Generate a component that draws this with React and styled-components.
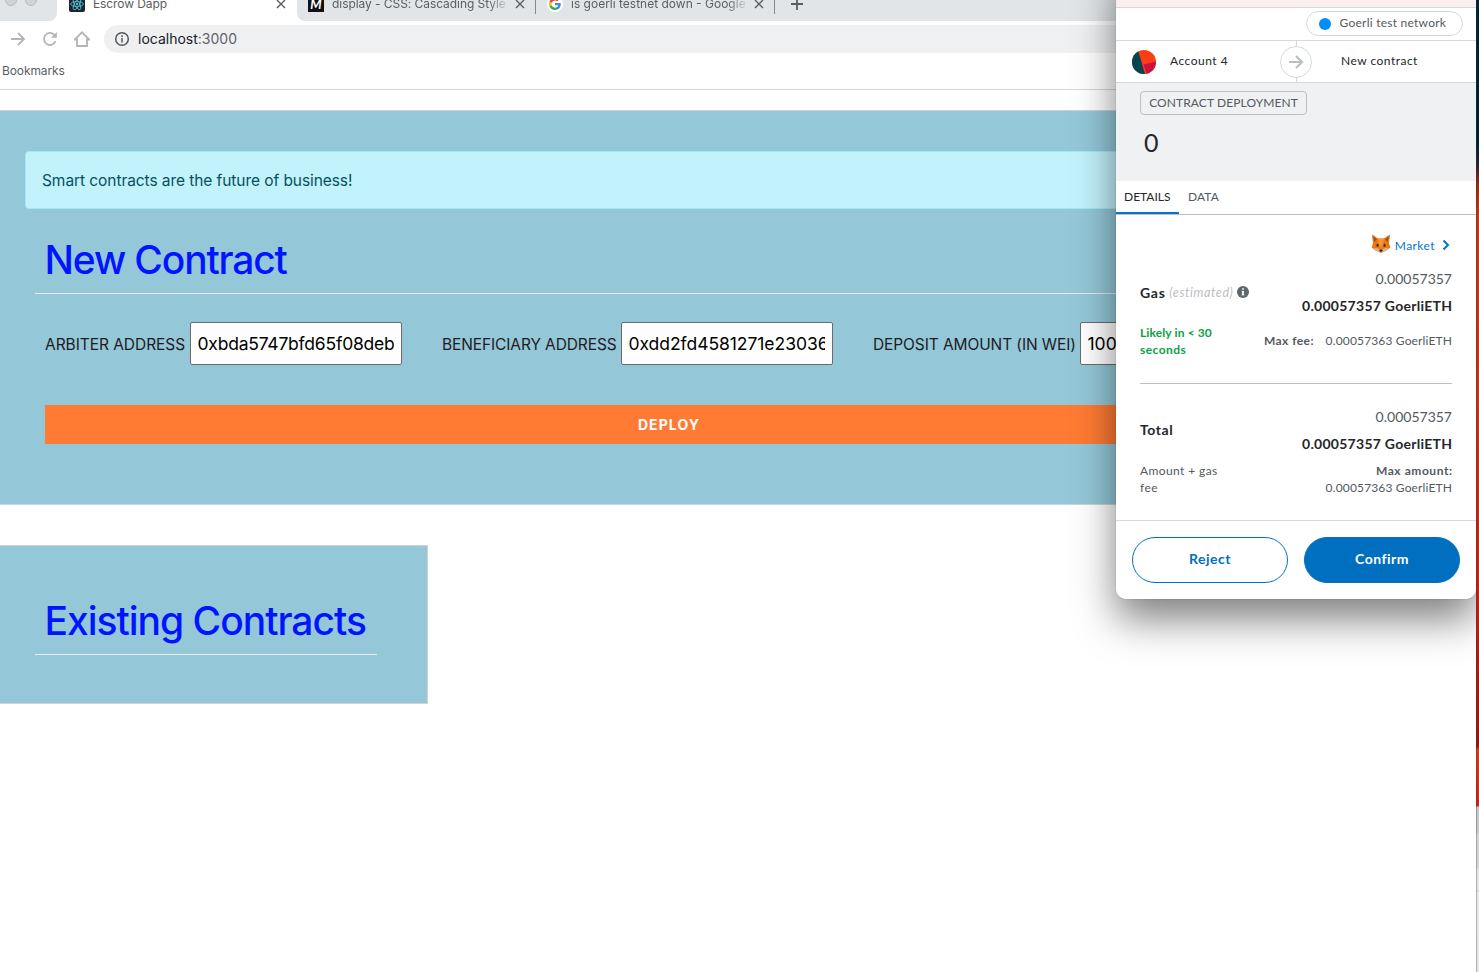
import React from "react";
import styled, { createGlobalStyle, css } from "styled-components";

const Global = createGlobalStyle`
  *, *::before, *::after { box-sizing: border-box; }
  html, body { margin: 0; padding: 0; background: #fff; }
  body { overflow: hidden; }
`;

const ui = `Inter, "Open Sans", sans-serif`;
const euclid = `Lato, "Open Sans", sans-serif`;

const Desktop = styled.div`
  position: relative;
  display: flex;
  width: 1479px;
  height: 972px;
  overflow: hidden;
  font-family: ${ui};
`;
const BrowserWindow = styled.main`
  flex: 1;
  min-width: 0;
  background: #fff;
  overflow: hidden;
`;
const Wallpaper = styled.div`
  width: 3px;
  flex: none;
  border-left: 1px solid rgba(60, 50, 50, 0.3);
  background: linear-gradient(
    to bottom,
    #02202f 0, #02202f 145px, #2b2230 165px, #8f2f1c 185px, #b83a1a 215px, #b8361b 400px,
    #b3251a 600px, #8d1a14 747px, #c8401e 749px, #bb2c18 806px, #c4c4c4 807px, #c9c9c9 833px,
    #d6d6d6 834px, #d4d4d4 868px, #e2e2e2 869px, #e6e6e6 890px, #c8c8c8 891px, #e8e8e8 892px, #e6e6e6 972px
  );
`;

/* Browser chrome */
const TabStrip = styled.div`
  display: flex;
  height: 21px;
  background: #fff;
`;
const WindowControls = styled.div`
  display: flex;
  gap: 8px;
  width: 57px;
  height: 21px;
  padding-left: 5px;
  background: #e2e5e8;
  border-bottom-right-radius: 8px;
`;
const Light = styled.span`
  width: 12px;
  height: 12px;
  margin-top: -6px;
  border-radius: 50%;
  background: #d2d3d4;
  border: 1px solid #b9babb;
`;
const Tab = styled.div`
  display: flex;
  align-items: center;
  width: ${(p) => p.$w}px;
  height: 8px;
  padding: 0 ${(p) => p.$pr || 10}px 0 ${(p) => p.$pl || 11}px;
`;
const TabTitle = styled.span`
  flex: 1;
  min-width: 0;
  margin: 0 5px 0 8px;
  font-size: 12px;
  line-height: 16px;
  letter-spacing: ${(p) => p.$ls || 0}px;
  color: #5b5e61;
  white-space: nowrap;
  overflow: hidden;
  ${(p) => p.$fade && css`mask-image: linear-gradient(to right, #000 calc(100% - 22px), transparent);`}
`;
const InactiveTabs = styled.div`
  display: flex;
  flex: 1;
  background: #e2e5e8;
  border-bottom-left-radius: 8px;
`;
const TabDivider = styled.span`
  width: 1px;
  height: 14px;
  background: #85888b;
`;
const Favicon = styled.span`
  display: flex;
  flex: none;
  align-items: center;
  justify-content: center;
  width: 16px;
  height: 16px;
  overflow: hidden;
  border-radius: ${(p) => p.$r || 0};
  background: ${(p) => p.$bg};
  color: #fff;
  font: italic 700 13px/16px ${euclid};
`;
const Toolbar = styled.div`
  display: flex;
  align-items: center;
  height: 36px;
  padding-left: 10px;
`;
const ToolIcons = styled.div`
  display: flex;
  align-items: center;
  gap: 16px;
  width: 94px;
`;
const AddressBar = styled.div`
  display: flex;
  align-items: center;
  flex: 1;
  height: 28px;
  padding-left: 10px;
  gap: 8px;
  border-radius: 14px 0 0 14px;
  background: #eff0f2;
  color: #5f6368;
`;
const Url = styled.span`
  padding-bottom: 1px;
  font-size: 14px;
  line-height: 18px;
`;
const Host = styled.span`
  color: #202124;
`;
const BookmarksBar = styled.div`
  height: 33px;
  padding: 6px 0 0 2px;
  border-bottom: 1px solid #d5d6d7;
  font-size: 12px;
  line-height: 16px;
  letter-spacing: -0.1px;
  color: #5b5e61;
`;

/* Page */
const Page = styled.div`
  display: flex;
  flex-direction: column;
  align-items: flex-start;
  gap: 40px;
  padding-top: 20px;
`;
const Panel = styled.section`
  width: ${(p) => p.$w}px;
  height: ${(p) => p.$h}px;
  padding: ${(p) => p.$pad};
  border: 1px solid #d3d3d3;
  border-left: 0;
  background: #94c8d8;
`;
const Alert = styled.div`
  width: 1286px;
  height: 58px;
  margin: 0 0 27px -10px;
  padding: 17px 16px 0;
  border: 1px solid #9eeaf9;
  border-radius: 4px;
  background: #c2f2fb;
  color: #055160;
  font-size: 15.5px;
  line-height: 24px;
  letter-spacing: -0.07px;
`;
const Heading = styled.h1`
  margin: 0;
  padding: 0 0 9px 9.5px;
  border-bottom: 1px solid #e9ecef;
  color: #0014ff;
  font-size: 39px;
  font-weight: 550;
  line-height: 48px;
  white-space: nowrap;
  letter-spacing: ${(p) => p.$ls}px;
`;
const Fields = styled.div`
  display: flex;
  align-items: center;
  gap: 40px;
  padding: 28px 0 0 10px;
`;
const Field = styled.label`
  display: flex;
  align-items: center;
  justify-content: space-between;
  flex: none;
  width: ${(p) => p.$w}px;
  color: #211a1e;
  font-size: 15.5px;
  letter-spacing: ${(p) => p.$ls}px;
  white-space: nowrap;
`;
const FieldName = styled.span`
  padding-top: 2px;
`;
const FieldInput = styled.input`
  width: 212px;
  height: 43px;
  padding: 0 7px 0 6.5px;
  border: 1px solid #6b6b6b;
  border-radius: 2px;
  background: #fff;
  color: #000;
  font: 400 17.5px ${ui};
  letter-spacing: ${(p) => p.$ls}px;
`;
const DeployButton = styled.button`
  display: block;
  width: 1246px;
  height: 39px;
  margin: 40px 0 0 10px;
  padding: 0 0 0 2px;
  border: 0;
  background: #ff7b33;
  color: #fff;
  font: 700 14px ${ui};
  letter-spacing: 1.1px;
`;

/* Wallet popup */
const Popup = styled.aside`
  position: absolute;
  top: 0;
  left: 1116px;
  display: flex;
  flex-direction: column;
  width: 360px;
  height: 599px;
  overflow: hidden;
  border-radius: 0 0 10px 10px;
  background: #fff;
  font-family: ${euclid};
  color: #24272a;
`;
const ShadowClip = styled.div`
  position: absolute;
  inset: 0 3px 0 0;
  overflow: hidden;
  pointer-events: none;
`;
const PopupShadow = styled.div`
  position: absolute;
  top: -40px;
  left: 1116px;
  width: 360px;
  height: 639px;
  border-radius: 10px;
  box-shadow: 0 0 1px rgba(0, 0, 0, 0.5), 0 20px 40px rgba(0, 0, 0, 0.5);
`;
const Warning = styled.div`
  height: 8px;
  background: #fbefee;
  border-bottom: 1px solid #d6d9dc;
`;
const NetworkRow = styled.div`
  display: flex;
  justify-content: flex-end;
  height: 33px;
  padding: 3px 13px 0 0;
  border-bottom: 1px solid #d6d9dc;
`;
const NetworkPill = styled.div`
  display: flex;
  align-items: center;
  gap: 8.5px;
  width: 157px;
  height: 25px;
  padding-left: 12px;
  border: 1px solid #d6d9dc;
  border-radius: 13px;
`;
const Dot = styled.span`
  width: 12px;
  height: 12px;
  border-radius: 50%;
  background: #038dfb;
`;
const Txt = styled.span`
  margin-right: ${(p) => -(p.$ls || 0)}px;
  font-size: ${(p) => p.$s || 12}px;
  font-weight: ${(p) => (p.$b ? 700 : 400)};
  font-style: ${(p) => (p.$i ? "italic" : "normal")};
  line-height: 17px;
  color: ${(p) => p.$c || "#24272a"};
  letter-spacing: ${(p) => p.$ls || 0}px;
  white-space: nowrap;
`;
const RaisedTxt = styled(Txt)`
  padding-bottom: 2px;
`;
const Parties = styled.div`
  display: grid;
  grid-template-columns: 164px 32px 1fr;
  align-items: center;
  height: 42px;
  border-bottom: 1px solid #d6d9dc;
`;
const Sender = styled.div`
  display: flex;
  align-items: center;
  gap: 14px;
  padding-left: 16px;
`;
const PartyName = styled.div`
  display: flex;
  padding: 0 0 2px ${(p) => p.$pl || 0}px;
`;
const Summary = styled.div`
  height: 98px;
  padding: 8px 24px 0;
  background: #f0f1f3;
`;
const Tag = styled.div`
  display: flex;
  align-items: center;
  justify-content: center;
  width: 167px;
  height: 24px;
  border: 1px solid #bbc0c5;
  border-radius: 4px;
`;
const Amount = styled.div`
  padding: 10px 0 0 4px;
  font-size: 25px;
  line-height: 34px;
`;
const Tabs = styled.div`
  display: flex;
  height: 34px;
  border-bottom: 1px solid #bbc0c5;
`;
const DetailTab = styled.div`
  display: flex;
  width: ${(p) => p.$w}px;
  height: 33px;
  padding: 7px 0 0 ${(p) => p.$pl}px;
  border-bottom: ${(p) => (p.$on ? "2px solid #0376c9" : "0")};
`;
const Body = styled.div`
  flex: 1;
  padding: 18px 24px 0;
`;
const MarketRow = styled.div`
  display: flex;
  justify-content: flex-end;
  align-items: center;
  height: 24px;
  gap: 3.5px;
`;
const Line = styled.div`
  display: flex;
  justify-content: space-between;
  height: ${(p) => p.$h}px;
`;
const Labels = styled.div`
  display: flex;
  flex-direction: ${(p) => (p.$col ? "column" : "row")};
  gap: ${(p) => (p.$col ? 0 : 4.5)}px;
  padding-top: ${(p) => p.$pt || 0}px;
`;
const Values = styled.div`
  display: flex;
  flex-direction: ${(p) => (p.$row ? "row" : "column")};
  align-items: ${(p) => (p.$row ? "flex-start" : "flex-end")};
  gap: ${(p) => p.$gap || 0}px;
  padding-top: ${(p) => p.$pt || 0}px;
`;
const Rule = styled.div`
  height: 1px;
  background: #bbc0c5;
`;
const Footer = styled.div`
  display: flex;
  gap: 16px;
  height: 79px;
  padding: 16px;
  border-top: 1px solid #d6d9dc;
`;
const Action = styled.button`
  flex: 1;
  height: 46px;
  padding: 0 0 3px;
  border: 1px solid #0070c0;
  border-radius: 23px;
  background: ${(p) => (p.$primary ? "#006fc0" : "#fff")};
  color: ${(p) => (p.$primary ? "#fff" : "#0070c0")};
  font: 700 14px ${euclid};
  letter-spacing: 0.5px;
`;
const Icon = styled.svg`
  flex: none;
  display: block;
  margin: ${(p) => p.$m || 0};
`;

const Close = () => (
  <Icon width="10" height="10" viewBox="0 0 10 10" stroke="#5b5e61" strokeWidth="1.4">
    <path d="M1 1l8 8M9 1l-8 8" />
  </Icon>
);
const ReactLogo = () => (
  <svg width="14" height="14" viewBox="-12 -12 24 24" fill="none" stroke="#4fc3e0" strokeWidth="1.5">
    <circle r="2" fill="#4fc3e0" stroke="none" />
    <ellipse rx="11" ry="4.2" />
    <ellipse rx="11" ry="4.2" transform="rotate(60)" />
    <ellipse rx="11" ry="4.2" transform="rotate(120)" />
  </svg>
);
const GoogleLogo = () => (
  <svg width="12" height="12" viewBox="0 0 24 24">
    <path fill="#4285f4" d="M23.5 12.3c0-.8-.1-1.6-.2-2.3H12v4.5h6.5c-.3 1.5-1.1 2.7-2.4 3.6v3h3.9c2.2-2.1 3.5-5.2 3.5-8.8z" />
    <path fill="#34a853" d="M12 24c3.2 0 6-1.1 8-2.9l-3.9-3c-1.1.7-2.4 1.2-4.1 1.2-3.1 0-5.8-2.1-6.7-5H1.3v3.1C3.3 21.3 7.3 24 12 24z" />
    <path fill="#fbbc05" d="M5.3 14.3c-.3-.7-.4-1.5-.4-2.3s.1-1.6.4-2.3V6.6H1.3C.5 8.2 0 10 0 12s.5 3.8 1.3 5.4l4-3.1z" />
    <path fill="#ea4335" d="M12 4.8c1.8 0 3.3.6 4.6 1.8L20 3.1C18 1.2 15.2 0 12 0 7.3 0 3.3 2.7 1.3 6.6l4 3.1c.9-2.8 3.6-4.9 6.7-4.9z" />
  </svg>
);
const Fox = () => (
  <Icon width="20" height="20" viewBox="0 0 20 20" $m="-3px 0 0 0">
    <path d="M1 1.2Q1 .6 1.7.8L7 4.500h6L18.300.8q.7-.2.7.4L18 9l1.300 4.500-4.300 3.200L10 19l-5-2.300-4.300-3.200L2 9z" fill="#e8771a" />
    <path d="M2.3 2.5L6 5.2 3.2 8zM17.7 2.5L14 5.2 16.8 8z" fill="#9a5222" />
    <path d="M7 4.5h6L11.5 12h-3z" fill="#f7962f" />
    <path d="M2 14.5L5.5 14l4.5 2 4.5-2 3.5.5-3 2.2L10 19l-5-2.3z" fill="#d9b48c" />
    <path d="M8.5 11.5h3L10 16.5z" fill="#f08b2a" />
    <ellipse cx="6.5" cy="11.3" rx="1" ry="1.5" fill="#38251b" />
    <ellipse cx="13.5" cy="11.3" rx="1" ry="1.5" fill="#38251b" />
    <ellipse cx="10" cy="16.6" rx="1.7" ry="1.2" fill="#30241f" />
  </Icon>
);
const Avatar = () => (
  <Icon width="24" height="24" viewBox="0 0 24 24">
    <defs><clipPath id="avatar"><circle cx="12" cy="12" r="12" /></clipPath></defs>
    <g clipPath="url(#avatar)">
      <rect width="24" height="24" fill="#ff3d14" />
      <path d="M0 0h6L13 24H0z" fill="#034551" />
      <path d="M11.5 14.5L24 11.5V24H14.5z" fill="#c8143f" />
    </g>
  </Icon>
);
const TransferArrow = () => (
  <Icon width="32" height="41" viewBox="0 0 32 41" fill="none">
    <path d="M16.5 0v41" stroke="#d6d9dc" />
    <circle cx="16" cy="21" r="15.5" fill="#fff" stroke="#d6d9dc" />
    <path d="M9 21h12.5M16 15l6 6-6 6" stroke="#bbc0c5" strokeWidth="2.2" />
  </Icon>
);
const Info = () => (
  <Icon width="12" height="12" viewBox="0 0 12 12" $m="2px 0 0 0">
    <circle cx="6" cy="6" r="6" fill="#5e666e" />
    <path d="M6 2.2v1.6M6 5v4" stroke="#fff" strokeWidth="1.7" />
    <path d="M4.8 5.4H6M4.6 8.9h2.8" stroke="#fff" strokeWidth=".9" />
  </Icon>
);

const grey = "#535a61";

export default function App() {
  return (
    <Desktop>
      <Global />
      <BrowserWindow>
        <TabStrip>
          <WindowControls><Light /><Light /></WindowControls>
          <Tab $w={240} $pl={12} $pr={11}>
            <Favicon $bg="#20232a" $r="2px"><ReactLogo /></Favicon>
            <TabTitle $ls={-0.1}>Escrow Dapp</TabTitle>
            <Close />
          </Tab>
          <InactiveTabs>
            <Tab $w={238}>
              <Favicon $bg="#111">M</Favicon>
              <TabTitle $fade $ls={-0.06}>display - CSS: Cascading Style Sheets</TabTitle>
              <Close />
            </Tab>
            <TabDivider />
            <Tab $w={238}>
              <Favicon $bg="#fff" $r="50%"><GoogleLogo /></Favicon>
              <TabTitle $fade>is goerli testnet down - Google Search</TabTitle>
              <Close />
            </Tab>
            <TabDivider />
            <Tab $w={40} $pl={16}>
              <Icon width="12" height="12" viewBox="0 0 12 12" stroke="#5b5e61" strokeWidth="1.8"><path d="M6 0v12M0 6h12" /></Icon>
            </Tab>
          </InactiveTabs>
        </TabStrip>
        <Toolbar>
          <ToolIcons>
            <Icon width="16" height="16" viewBox="0 0 16 16" fill="none" stroke="#b4b5b6" strokeWidth="1.8"><path d="M1 8h13M8 2l6 6-6 6" /></Icon>
            <Icon width="16" height="16" viewBox="0 0 16 16" fill="none" stroke="#b4b5b6" strokeWidth="1.8"><path d="M13.6 10A6 6 0 1 1 12.3 3.8L14 5.5" /><path d="M14.8 1v5.8H9z" fill="#b4b5b6" stroke="none" /></Icon>
            <Icon width="16" height="16" viewBox="0 0 16 16" fill="none" stroke="#b4b5b6" strokeWidth="1.8"><path d="M.8 8.5H3V15h10V8.5h2.2L8 1.3z" /></Icon>
          </ToolIcons>
          <AddressBar>
            <Icon width="16" height="16" viewBox="0 0 16 16" fill="none" stroke="#54585c" strokeWidth="1.5"><circle cx="8" cy="8" r="6.3" /><path d="M8 7v4.5M8 4.3v1.6" /></Icon>
            <Url><Host>localhost</Host>:3000</Url>
          </AddressBar>
        </Toolbar>
        <BookmarksBar>Bookmarks</BookmarksBar>
        <Page>
          <Panel $w={1352} $h={395} $pad="40px 50px 0 35px">
            <Alert>Smart contracts are the future of business!</Alert>
            <Heading $ls={-1.17}>New Contract</Heading>
            <Fields>
              <Field $w={357} $ls={-0.05}><FieldName>ARBITER ADDRESS</FieldName><FieldInput $ls={-0.22} defaultValue="0xbda5747bfd65f08deb" /></Field>
              <Field $w={391} $ls={-0.11}><FieldName>BENEFICIARY ADDRESS</FieldName><FieldInput $ls={-0.05} defaultValue="0xdd2fd4581271e230360" /></Field>
              <Field $w={419} $ls={-0.1}><FieldName>DEPOSIT AMOUNT (IN WEI)</FieldName><FieldInput $ls={0} defaultValue="100000" /></Field>
            </Fields>
            <DeployButton>DEPLOY</DeployButton>
          </Panel>
          <Panel $w={428} $h={159} $pad="51px 50px 0 35px">
            <Heading $ls={-1.01}>Existing Contracts</Heading>
          </Panel>
        </Page>
      </BrowserWindow>
      <Wallpaper />
      <ShadowClip><PopupShadow /></ShadowClip>
      <Popup>
        <Warning />
        <NetworkRow>
          <NetworkPill><Dot /><RaisedTxt $c={grey} $ls={0.24}>Goerli test network</RaisedTxt></NetworkPill>
        </NetworkRow>
        <Parties>
          <Sender><Avatar /><PartyName><Txt $ls={0.5}>Account 4</Txt></PartyName></Sender>
          <TransferArrow />
          <PartyName $pl={29}><Txt $ls={0.48}>New contract</Txt></PartyName>
        </Parties>
        <Summary>
          <Tag><RaisedTxt $c={grey} $ls={0.1}>CONTRACT DEPLOYMENT</RaisedTxt></Tag>
          <Amount>0</Amount>
        </Summary>
        <Tabs>
          <DetailTab $on $w={63} $pl={8}><Txt>DETAILS</Txt></DetailTab>
          <DetailTab $w={50} $pl={9}><Txt $c={grey} $ls={0.1}>DATA</Txt></DetailTab>
        </Tabs>
        <Body>
          <MarketRow>
            <Fox />
            <Txt $c="#0376c9" $ls={0.4}>Market</Txt>
            <Icon width="8" height="12" viewBox="0 0 8 12" fill="none" stroke="#0376c9" strokeWidth="2" $m="0 2px 0 4px"><path d="M1.5 1.5L6 6l-4.5 4.5" /></Icon>
          </MarketRow>
          <Line $h={67}>
            <Labels $pt={27}><Txt $s={14} $b $ls={0.7}>Gas</Txt><Txt $s={12.5} $i $c="#bbc0c5" $ls={0.6}>(estimated)</Txt><Info /></Labels>
            <Values $pt={13} $gap={10}><Txt $s={14} $c={grey}>0.00057357</Txt><Txt $s={14} $b $ls={0.27}>0.00057357 GoerliETH</Txt></Values>
          </Line>
          <Line $h={59}>
            <Labels $col><Txt $b $c="#0a9f45" $ls={0.12}>Likely in &lt; 30</Txt><Txt $b $c="#0a9f45" $ls={0.45}>seconds</Txt></Labels>
            <Values $row $pt={8} $gap={12}><Txt $b $c={grey} $ls={0.45}>Max fee:</Txt><Txt $c={grey} $ls={0.15}>0.00057363 GoerliETH</Txt></Values>
          </Line>
          <Rule />
          <Line $h={78}>
            <Labels $pt={37}><Txt $s={14} $b $ls={0.6}>Total</Txt></Labels>
            <Values $pt={24} $gap={10}><Txt $s={14} $c={grey}>0.00057357</Txt><Txt $s={14} $b $ls={0.27}>0.00057357 GoerliETH</Txt></Values>
          </Line>
          <Line $h={34}>
            <Labels $col><Txt $c={grey} $ls={0.4}>Amount + gas</Txt><Txt $c={grey} $ls={0.4}>fee</Txt></Labels>
            <Values><Txt $b $c={grey} $ls={0.55}>Max amount:</Txt><Txt $c={grey} $ls={0.15}>0.00057363 GoerliETH</Txt></Values>
          </Line>
        </Body>
        <Footer>
          <Action>Reject</Action>
          <Action $primary>Confirm</Action>
        </Footer>
      </Popup>
    </Desktop>
  );
}
